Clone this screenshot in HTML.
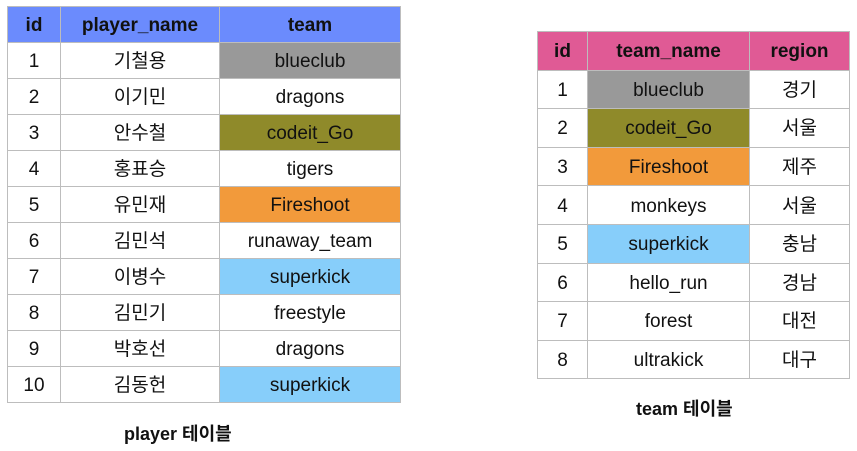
<!DOCTYPE html>
<html><head><meta charset="utf-8"><style>
body{margin:0;width:857px;height:451px;background:#fff;font-family:"Liberation Sans","Noto Sans CJK KR",sans-serif;position:relative;overflow:hidden}
table{position:absolute;border-collapse:collapse;table-layout:fixed}
td,th{border:1px solid #bdbdbd;text-align:center;padding:3px 0 0 0;font-size:19px;color:#111;line-height:20px}
th{font-weight:bold}
#p{left:7px;top:6px}
#p tr{height:36px}
#t{left:537px;top:31px}
#t tr{height:38.6px}
.h1 th{background:#6b8bfd}
.h2 th{background:#e05a95}
.g{background:#999}.o{background:#8f8a2a}.f{background:#f29a3b}.s{background:#87cefa}
.cap{position:absolute;font-weight:bold;font-size:18px;color:#111}
</style></head><body>
<table id="p">
<colgroup><col style="width:53px"><col style="width:159px"><col style="width:181px"></colgroup>
<tr class="h1"><th>id</th><th>player_name</th><th>team</th></tr>
<tr><td>1</td><td>기철용</td><td class="g">blueclub</td></tr>
<tr><td>2</td><td>이기민</td><td>dragons</td></tr>
<tr><td>3</td><td>안수철</td><td class="o">codeit_Go</td></tr>
<tr><td>4</td><td>홍표승</td><td>tigers</td></tr>
<tr><td>5</td><td>유민재</td><td class="f">Fireshoot</td></tr>
<tr><td>6</td><td>김민석</td><td>runaway_team</td></tr>
<tr><td>7</td><td>이병수</td><td class="s">superkick</td></tr>
<tr><td>8</td><td>김민기</td><td>freestyle</td></tr>
<tr><td>9</td><td>박호선</td><td>dragons</td></tr>
<tr><td>10</td><td>김동헌</td><td class="s">superkick</td></tr>
</table>
<table id="t">
<colgroup><col style="width:50px"><col style="width:162px"><col style="width:100px"></colgroup>
<tr class="h2"><th>id</th><th>team_name</th><th>region</th></tr>
<tr><td>1</td><td class="g">blueclub</td><td>경기</td></tr>
<tr><td>2</td><td class="o">codeit_Go</td><td>서울</td></tr>
<tr><td>3</td><td class="f">Fireshoot</td><td>제주</td></tr>
<tr><td>4</td><td>monkeys</td><td>서울</td></tr>
<tr><td>5</td><td class="s">superkick</td><td>충남</td></tr>
<tr><td>6</td><td>hello_run</td><td>경남</td></tr>
<tr><td>7</td><td>forest</td><td>대전</td></tr>
<tr><td>8</td><td>ultrakick</td><td>대구</td></tr>
</table>
<div class="cap" style="left:124px;top:420px">player 테이블</div>
<div class="cap" style="left:636px;top:395px">team 테이블</div>
</body></html>
